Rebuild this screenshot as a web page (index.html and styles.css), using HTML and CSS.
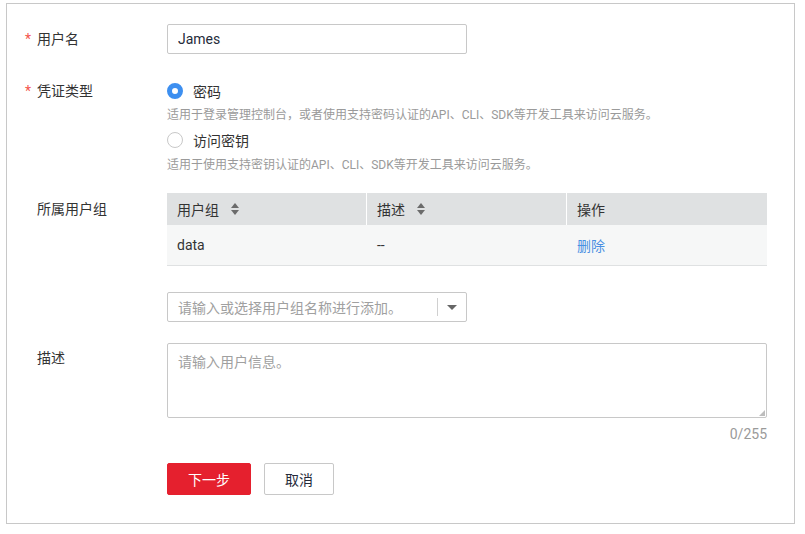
FILE: index.html
```html
<!DOCTYPE html>
<html lang="zh-CN">
<head>
<meta charset="utf-8">
<title>创建用户</title>
<link rel="stylesheet" href="styles.css">
</head>
<body>
<div class="panel">
  <div class="row row-name">
    <div class="label"><span class="star">*</span>用户名</div>
    <div class="field"><input class="text-input" type="text" value="James"></div>
  </div>

  <div class="row row-cred">
    <div class="label label-top"><span class="star">*</span>凭证类型</div>
    <div class="field">
      <div class="radio-line"><span class="radio checked"></span><span class="radio-text">密码</span></div>
      <div class="hint hint-first">适用于登录管理控制台，或者使用支持密码认证的API、CLI、SDK等开发工具来访问云服务。</div>
      <div class="radio-line"><span class="radio"></span><span class="radio-text">访问密钥</span></div>
      <div class="hint hint-second">适用于使用支持密钥认证的API、CLI、SDK等开发工具来访问云服务。</div>
    </div>
  </div>

  <div class="row row-group">
    <div class="label label-plain label-table">所属用户组</div>
    <div class="field">
      <div class="table">
        <div class="thead">
          <div class="th">用户组<span class="sort"><i class="up"></i><i class="down"></i></span></div>
          <div class="th">描述<span class="sort"><i class="up"></i><i class="down"></i></span></div>
          <div class="th">操作</div>
        </div>
        <div class="trow">
          <div class="td">data</div>
          <div class="td">--</div>
          <div class="td"><a class="link">删除</a></div>
        </div>
      </div>
      <div class="select">
        <span class="select-text">请输入或选择用户组名称进行添加。</span>
        <span class="select-divider"></span>
        <span class="select-arrow"></span>
      </div>
    </div>
  </div>

  <div class="row row-desc">
    <div class="label label-plain label-desc">描述</div>
    <div class="field">
      <div class="textarea-wrap">
        <textarea class="textarea" placeholder="请输入用户信息。"></textarea>
        <span class="resize-grip"></span>
      </div>
      <div class="counter">0/255</div>
      <div class="actions">
        <button class="btn btn-primary">下一步</button>
        <button class="btn btn-default">取消</button>
      </div>
    </div>
  </div>
</div>
</body>
</html>
```

FILE: styles.css
```css
* { box-sizing: border-box; }
html, body { margin: 0; padding: 0; background: #fff; }
body {
  font-family: "Roboto", "Noto Sans CJK SC", sans-serif;
  font-size: 14px;
  color: #252b3a;
}
.panel {
  margin: 3px 0 0 6px;
  width: 789px;
  height: 521px;
  border: 1px solid #c8c8c8;
  padding: 20px 26px 0 0;
}
.row { display: flex; }
.label {
  width: 160px;
  flex: none;
  padding-left: 18px;
  line-height: 20px;
  color: #333;
}
.star {
  display: inline-block;
  width: 12px;
  color: #f4564e;
}
.label-plain { padding-left: 30px; }
.field { flex: 1; }

.row-name { align-items: center; height: 30px; }
.text-input {
  width: 300px;
  height: 30px;
  border: 1px solid #c8c8c8;
  border-radius: 2px;
  padding: 0 10px;
  font-family: "Roboto", "Noto Sans CJK SC", sans-serif;
  font-size: 14px;
  color: #252b3a;
  outline: none;
}

.row-cred { margin-top: 27px; }
.radio-line { display: flex; align-items: center; height: 20px; }
.radio {
  width: 16px;
  height: 16px;
  border-radius: 50%;
  border: 1px solid #c8c8c8;
  background: #fff;
  margin-right: 10px;
  flex: none;
}
.radio.checked {
  border: 5px solid #3d8ff0;
  background: #fff;
}
.radio-text { color: #333; }
.hint {
  font-size: 12px;
  line-height: 18px;
  color: #9a9a9a;
}
.hint-first { margin: 5px 0 6px; }
.hint-second { margin: 6px 0 6px; }

.row-group { margin-top: 13px; }
.label-table { padding-top: 6px; }
.table { width: 600px; }
.thead {
  display: grid;
  grid-template-columns: 199px 200px 201px;
  height: 32px;
  background: #dfe1e2;
}
.th {
  display: flex;
  align-items: center;
  padding-left: 10px;
  color: #333;
  border-left: 1px solid #fff;
}
.th:first-child { border-left: none; }
.sort {
  display: inline-flex;
  flex-direction: column;
  align-items: center;
  gap: 2px;
  margin-left: 12px;
}
.sort i {
  display: block;
  width: 0;
  height: 0;
  border-left: 4px solid transparent;
  border-right: 4px solid transparent;
}
.sort .up { border-bottom: 5px solid #6b6b6b; }
.sort .down { border-top: 5px solid #6b6b6b; }
.trow {
  display: grid;
  grid-template-columns: 199px 200px 201px;
  height: 41px;
  background: #f6f7f7;
  border-bottom: 1px solid #dfe1e2;
}
.td {
  display: flex;
  align-items: center;
  padding-left: 10px;
  color: #333;
  border-left: 1px solid transparent;
}
.td:first-child { border-left: none; }
.link { color: #4a90e2; cursor: pointer; }

.select {
  margin-top: 26px;
  width: 300px;
  height: 30px;
  border: 1px solid #c8c8c8;
  border-radius: 2px;
  display: flex;
  align-items: center;
  padding-left: 10px;
}
.select-text { flex: 1; color: #a0a0a0; }
.select-divider {
  width: 1px;
  height: 18px;
  background: #d0d0d0;
}
.select-arrow {
  width: 0;
  height: 0;
  margin: 0 9px 0 9px;
  border-left: 5px solid transparent;
  border-right: 5px solid transparent;
  border-top: 5px solid #666;
}

.row-desc { margin-top: 21px; }
.label-desc { padding-top: 5px; }
.textarea-wrap { position: relative; width: 600px; height: 75px; }
.textarea {
  display: block;
  width: 600px;
  height: 75px;
  border: 1px solid #c8c8c8;
  border-radius: 2px;
  padding: 8px 10px;
  resize: none;
  font-family: "Roboto", "Noto Sans CJK SC", sans-serif;
  font-size: 14px;
  line-height: 20px;
  outline: none;
}
.textarea::placeholder { color: #a0a0a0; }
.resize-grip {
  position: absolute;
  right: 2px;
  bottom: 2px;
  width: 0;
  height: 0;
  border-left: 6px solid transparent;
  border-bottom: 6px solid #bdbdbd;
}
.counter {
  margin-top: 6px;
  width: 600px;
  text-align: right;
  line-height: 20px;
  color: #9a9a9a;
}
.actions { margin-top: 19px; display: flex; }
.btn {
  height: 32px;
  border-radius: 2px;
  font-family: "Roboto", "Noto Sans CJK SC", sans-serif;
  font-size: 14px;
  padding: 0;
  cursor: pointer;
}
.btn-primary {
  width: 84px;
  background: #e5202e;
  border: 1px solid #e5202e;
  color: #fff;
}
.btn-default {
  width: 70px;
  margin-left: 13px;
  background: #fff;
  border: 1px solid #c8c8c8;
  color: #252b3a;
}
```
